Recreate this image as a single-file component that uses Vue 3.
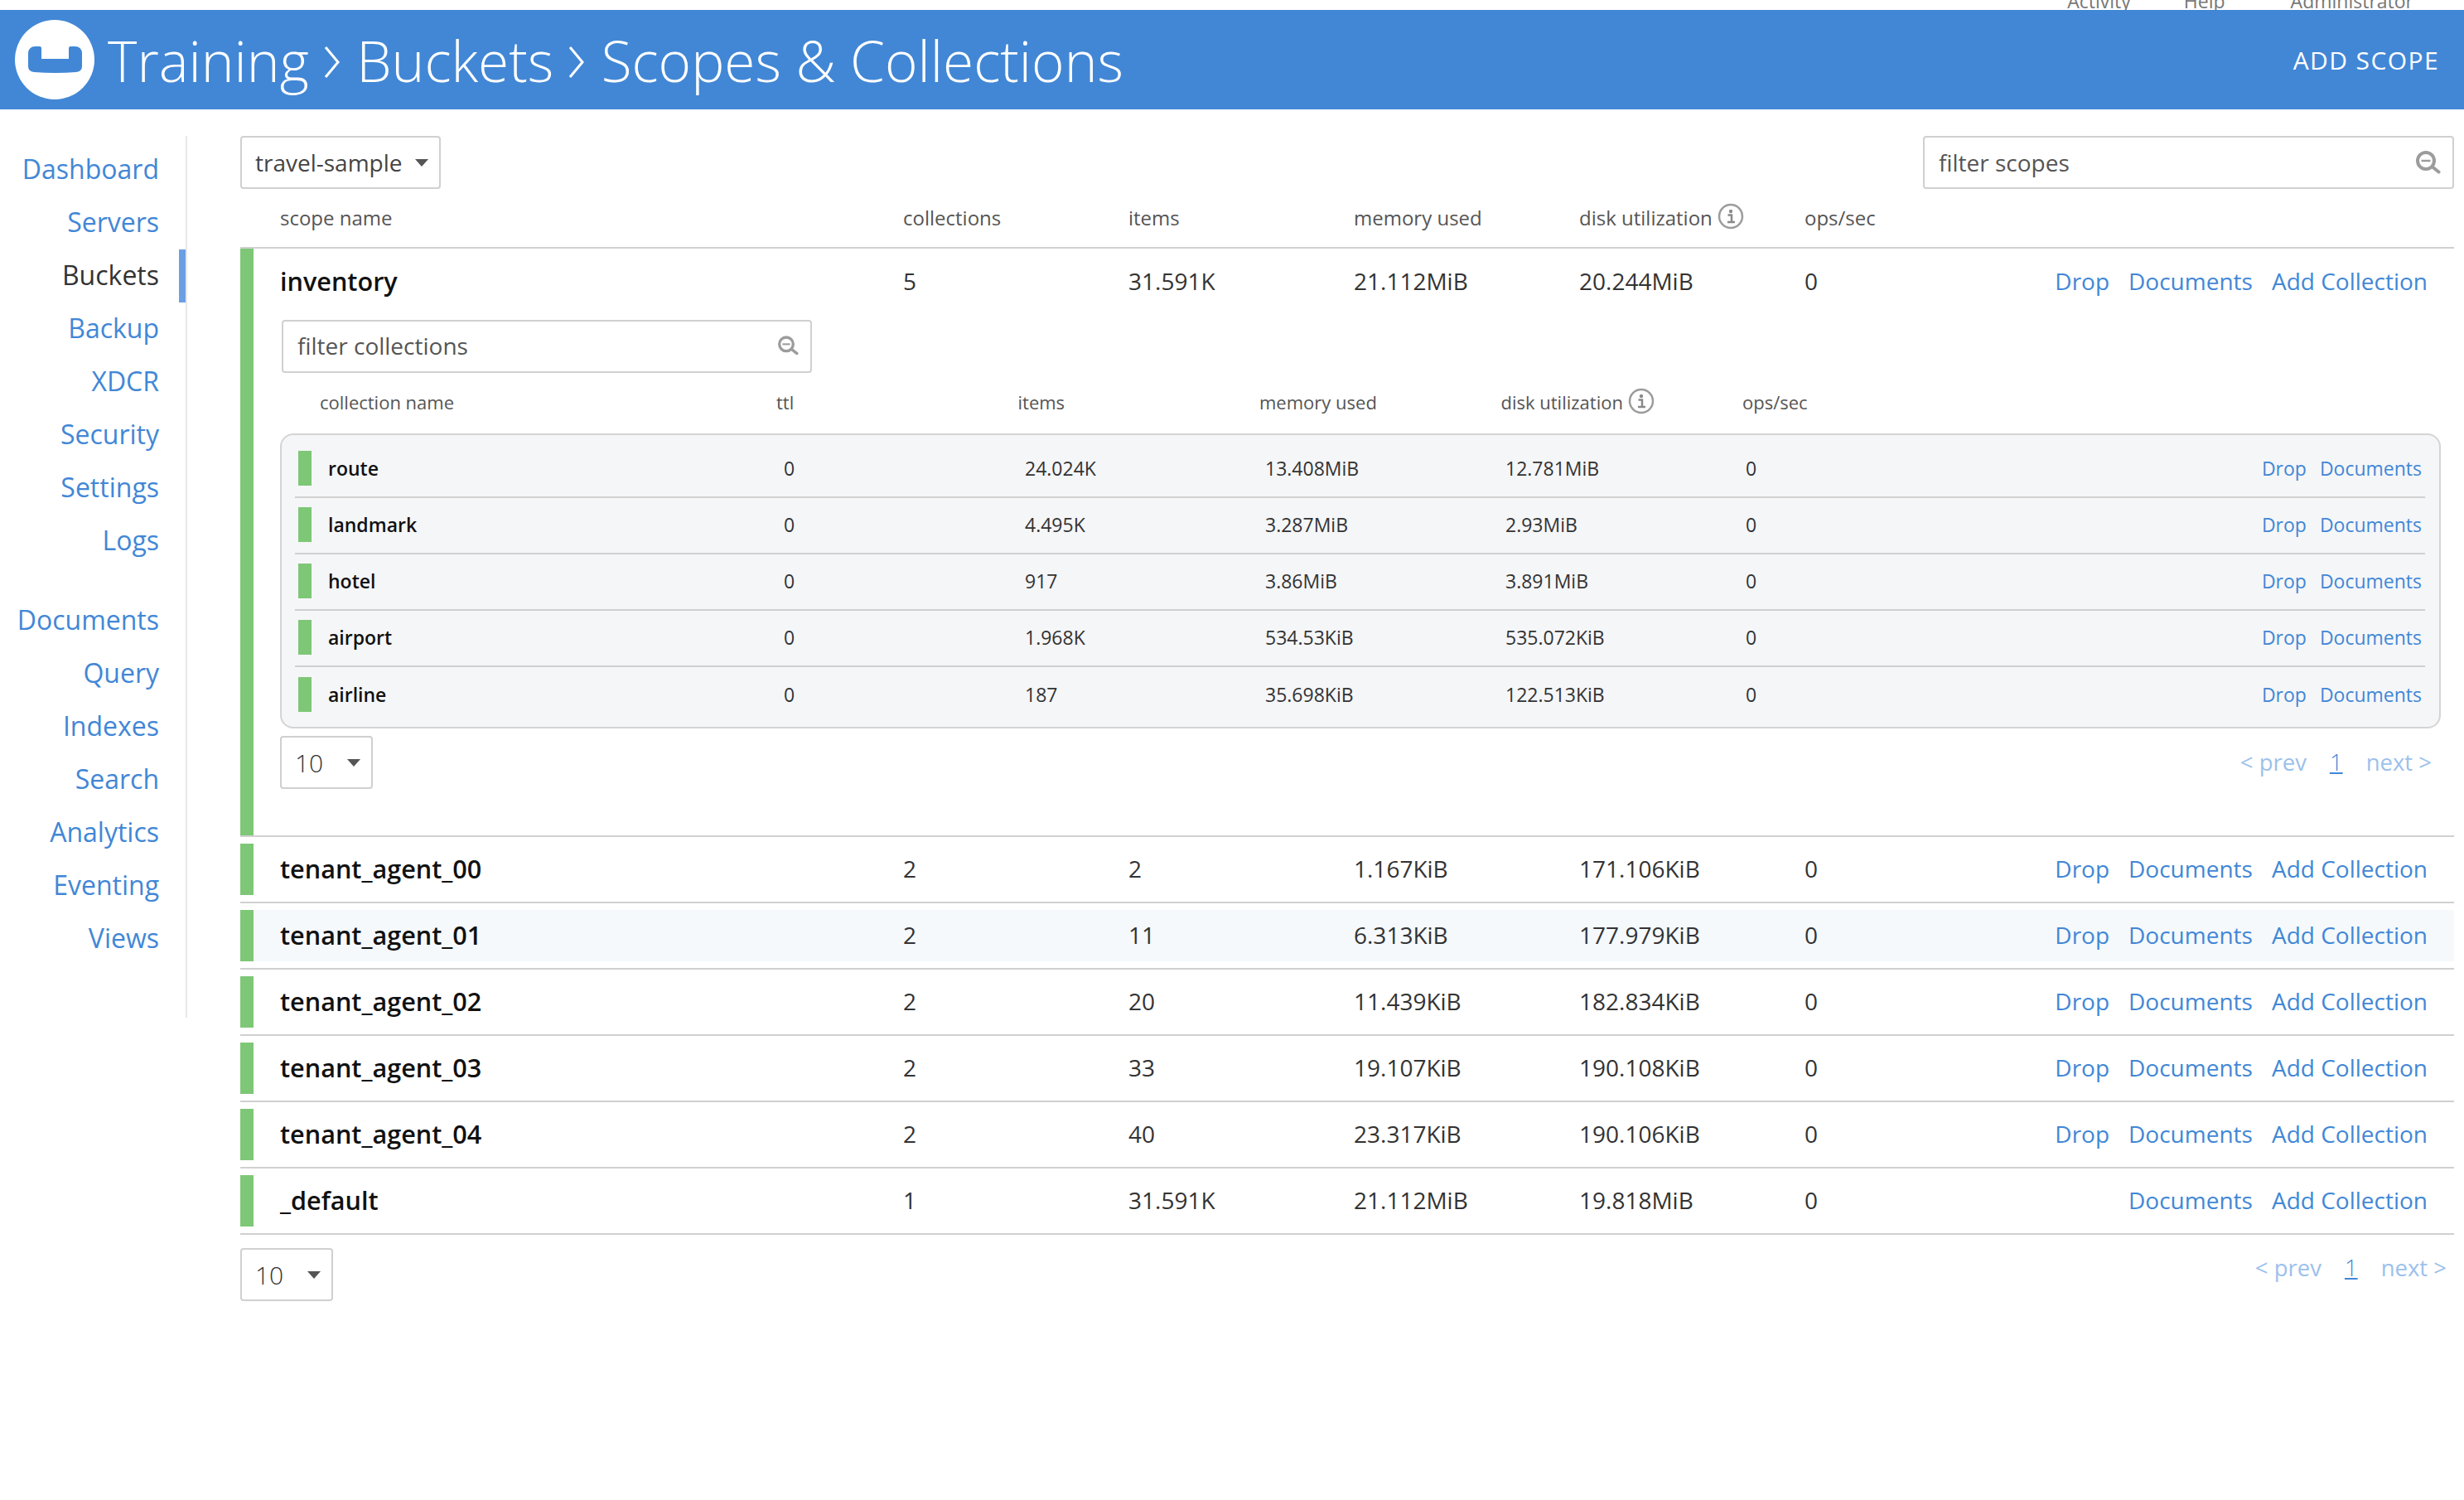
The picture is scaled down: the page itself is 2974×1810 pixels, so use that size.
<template>
  <div class="page">
    <div class="top-links">
      <span>Activity</span>
      <span>Help</span>
      <span class="admin">Administrator</span>
    </div>
    <header class="header">
      <div class="logo">
        <svg width="65" height="32" viewBox="0 0 65 32">
          <path d="M0 8a8 8 0 0 1 8-8h6a2 2 0 0 1 2 2v13h33V2a2 2 0 0 1 2-2h6a8 8 0 0 1 8 8v16q0 6-7 7q-25 2-51 0q-7-1-7-7z" fill="#4287d6" />
        </svg>
      </div>
      <h1 class="title">
        <span>Training</span>
        <svg class="crumb" width="21" height="38" viewBox="0 0 21 38"><path d="M3 1l15 18L3 37" fill="none" stroke="#fff" stroke-width="3" /></svg>
        <span>Buckets</span>
        <svg class="crumb" width="21" height="38" viewBox="0 0 21 38"><path d="M3 1l15 18L3 37" fill="none" stroke="#fff" stroke-width="3" /></svg>
        <span>Scopes &amp; Collections</span>
      </h1>
      <a class="add-scope">ADD SCOPE</a>
    </header>
    <div class="body">
      <nav class="sidebar">
        <div class="nav-group">
          <a v-for="item in navMain" :key="item" class="nav-item" :class="{ active: item === 'Buckets' }">{{ item }}</a>
        </div>
        <div class="nav-group">
          <a v-for="item in navData" :key="item" class="nav-item">{{ item }}</a>
        </div>
      </nav>
      <main class="content">
        <div class="toolbar">
          <div class="select bucket-select">travel-sample<span class="caret"></span></div>
          <div class="filter scope-filter">
            <span>filter scopes</span>
            <svg class="search" width="30" height="28" viewBox="0 0 30 28">
              <circle cx="12" cy="12" r="10" fill="none" stroke="#9c9c9c" stroke-width="4" />
              <path d="M6.500 12h11" stroke="#9c9c9c" stroke-width="2.500" />
              <path d="M20 19.500l7.500 6" stroke="#9c9c9c" stroke-width="4" stroke-linecap="round" />
            </svg>
          </div>
        </div>
        <div class="scope-head">
          <span>scope name</span>
          <span>collections</span>
          <span>items</span>
          <span>memory used</span>
          <span class="with-info">disk utilization
            <svg width="32" height="32" viewBox="0 0 32 32">
              <circle cx="16" cy="16" r="14" fill="none" stroke="#9c9c9c" stroke-width="2.500" />
              <circle cx="16" cy="10" r="2.200" fill="#8a8a8a" />
              <path d="M12.500 14.500h4.500v8M12 23h9" fill="none" stroke="#8a8a8a" stroke-width="2.500" />
            </svg>
          </span>
          <span>ops/sec</span>
        </div>

        <section class="scope-row open">
          <div class="scope-bar"></div>
          <div class="scope-main">
            <div class="scope-cells">
              <span class="scope-name">inventory</span>
              <span>5</span>
              <span>31.591K</span>
              <span>21.112MiB</span>
              <span>20.244MiB</span>
              <span>0</span>
              <div class="actions"><a>Drop</a><a>Documents</a><a>Add Collection</a></div>
            </div>
            <div class="filter collection-filter">
              <span>filter collections</span>
              <svg class="search" width="25" height="24" viewBox="0 0 30 28">
                <circle cx="12" cy="12" r="10" fill="none" stroke="#9c9c9c" stroke-width="4" />
                <path d="M6.500 12h11" stroke="#9c9c9c" stroke-width="2.500" />
                <path d="M20 19.500l7.500 6" stroke="#9c9c9c" stroke-width="4" stroke-linecap="round" />
              </svg>
            </div>
            <div class="collection-head">
              <span>collection name</span>
              <span>ttl</span>
              <span>items</span>
              <span>memory used</span>
              <span class="with-info">disk utilization
                <svg width="32" height="32" viewBox="0 0 32 32">
                  <circle cx="16" cy="16" r="14" fill="none" stroke="#9c9c9c" stroke-width="2.500" />
                  <circle cx="16" cy="10" r="2.200" fill="#8a8a8a" />
                  <path d="M12.500 14.500h4.500v8M12 23h9" fill="none" stroke="#8a8a8a" stroke-width="2.500" />
                </svg>
              </span>
              <span>ops/sec</span>
            </div>
            <div class="collection-panel">
              <div v-for="c in collections" :key="c.name" class="collection-row">
                <div class="collection-bar"></div>
                <span class="collection-name">{{ c.name }}</span>
                <span>0</span>
                <span>{{ c.items }}</span>
                <span>{{ c.memory }}</span>
                <span>{{ c.disk }}</span>
                <span>0</span>
                <div class="collection-actions"><a>Drop</a><a>Documents</a></div>
              </div>
            </div>
            <div class="pager inner-pager">
              <div class="select size-select inner-size">10<span class="caret"></span></div>
              <div class="pages"><a>&lt; prev</a><a class="current">1</a><a>next &gt;</a></div>
            </div>
          </div>
        </section>

        <section v-for="s in scopes" :key="s.name" class="scope-row" :class="{ hovered: s.name === 'tenant_agent_01' }">
          <div class="scope-bar"></div>
          <div class="scope-main">
            <div class="scope-cells">
              <span class="scope-name">{{ s.name }}</span>
              <span>{{ s.collections }}</span>
              <span>{{ s.items }}</span>
              <span>{{ s.memory }}</span>
              <span>{{ s.disk }}</span>
              <span>0</span>
              <div class="actions">
                <a v-if="s.name !== '_default'">Drop</a><a>Documents</a><a>Add Collection</a>
              </div>
            </div>
          </div>
        </section>

        <div class="pager outer-pager">
          <div class="select size-select">10<span class="caret"></span></div>
          <div class="pages"><a>&lt; prev</a><a class="current">1</a><a>next &gt;</a></div>
        </div>
      </main>
    </div>
  </div>
</template>

<script setup>
const navMain = ["Dashboard", "Servers", "Buckets", "Backup", "XDCR", "Security", "Settings", "Logs"];
const navData = ["Documents", "Query", "Indexes", "Search", "Analytics", "Eventing", "Views"];

const collections = [
  { name: "route", items: "24.024K", memory: "13.408MiB", disk: "12.781MiB" },
  { name: "landmark", items: "4.495K", memory: "3.287MiB", disk: "2.93MiB" },
  { name: "hotel", items: "917", memory: "3.86MiB", disk: "3.891MiB" },
  { name: "airport", items: "1.968K", memory: "534.53KiB", disk: "535.072KiB" },
  { name: "airline", items: "187", memory: "35.698KiB", disk: "122.513KiB" },
];

const scopes = [
  { name: "tenant_agent_00", collections: 2, items: "2", memory: "1.167KiB", disk: "171.106KiB" },
  { name: "tenant_agent_01", collections: 2, items: "11", memory: "6.313KiB", disk: "177.979KiB" },
  { name: "tenant_agent_02", collections: 2, items: "20", memory: "11.439KiB", disk: "182.834KiB" },
  { name: "tenant_agent_03", collections: 2, items: "33", memory: "19.107KiB", disk: "190.108KiB" },
  { name: "tenant_agent_04", collections: 2, items: "40", memory: "23.317KiB", disk: "190.106KiB" },
  { name: "_default", collections: 1, items: "31.591K", memory: "21.112MiB", disk: "19.818MiB" },
];
</script>

<style>
html,
body {
  background: #fff;
}
</style>

<style scoped>
.page {
  width: 2974px;
  height: 1810px;
  overflow: hidden;
  font-family: "Open Sans", sans-serif;
  color: #333;
}

a {
  color: #4287d6;
  cursor: pointer;
}

.top-links {
  height: 12px;
  overflow: hidden;
  display: flex;
  justify-content: flex-end;
  align-items: flex-end;
  gap: 64px;
  padding-right: 61px;
  font-size: 23px;
  line-height: 32px;
  color: #777;
}

.top-links span {
  position: relative;
  top: 5px;
}

.top-links .admin {
  margin-left: 15px;
}

.header {
  height: 120px;
  background: #4287d6;
  display: flex;
  align-items: center;
  padding: 0 30px 0 18px;
  color: #fff;
}

.logo {
  width: 96px;
  height: 96px;
  border-radius: 50%;
  background: #fff;
  display: flex;
  align-items: center;
  justify-content: center;
  flex: none;
}

.title {
  margin: 0 0 0 16px;
  padding-top: 2px;
  font-size: 67.500px;
  font-weight: 300;
  line-height: 88px;
  flex: 1;
  white-space: nowrap;
  display: flex;
  align-items: center;
}

.crumb {
  margin: 4px 19.500px 0 17px;
}

.add-scope {
  color: #fff;
  font-size: 30px;
  font-weight: 500;
  letter-spacing: 1.400px;
}

.body {
  display: flex;
  padding-top: 32px;
}

.sidebar {
  width: 226px;
  height: 1064px;
  box-sizing: border-box;
  border-right: 2px solid #e8e8e8;
  flex: none;
  padding-top: 8px;
  display: flex;
  flex-direction: column;
  gap: 32px;
}

.nav-group {
  display: flex;
  flex-direction: column;
}

.nav-item {
  position: relative;
  height: 64px;
  line-height: 64px;
  text-align: right;
  padding-right: 32px;
  font-size: 32px;
}

.nav-item.active {
  color: #333;
}

.nav-item.active::after {
  content: "";
  position: absolute;
  right: 0;
  top: 1px;
  width: 8px;
  height: 64px;
  background: #6b9fe4;
}

.content {
  margin-left: 64px;
  width: 2672px;
  flex: none;
}

.toolbar {
  display: flex;
  justify-content: space-between;
}

.select,
.filter {
  box-sizing: border-box;
  height: 64px;
  border: 2px solid #d0d0d0;
  border-radius: 4px;
  background: #fff;
  display: flex;
  align-items: center;
  font-size: 28px;
  color: #444;
}

.select {
  position: relative;
  padding-left: 16px;
}

.caret {
  position: absolute;
  right: 13px;
  top: 26px;
  border-left: 8px solid transparent;
  border-right: 8px solid transparent;
  border-top: 9px solid #555;
}

.bucket-select {
  width: 242px;
}

.size-select {
  width: 112px;
  font-weight: 300;
  font-size: 30px;
  color: #333;
}

.filter {
  justify-content: space-between;
  padding: 0 14px 0 17px;
  color: #555;
}

.scope-filter {
  width: 641px;
}

.collection-filter {
  width: 640px;
  margin: 6px 0 0 2px;
  padding-bottom: 2px;
}

.scope-head,
.scope-cells {
  display: grid;
  grid-template-columns: 752px repeat(5, 272px) 1fr;
  align-items: center;
}

.scope-head {
  height: 68px;
  padding: 0 0 2px 48px;
  border-bottom: 2px solid #d0d0d0;
  font-size: 24px;
  color: #555;
}

.with-info {
  display: flex;
  align-items: center;
  gap: 6px;
}

.with-info svg {
  margin-top: -3px;
}

.scope-row {
  display: flex;
  position: relative;
  border-bottom: 2px solid #d0d0d0;
}

.scope-row:not(.open) {
  padding: 8px 0;
}

.scope-bar {
  width: 16px;
  flex: none;
  background: #7ec777;
}

.scope-main {
  flex: 1;
  padding-left: 32px;
  min-width: 0;
}

.hovered {
  background: linear-gradient(#fff 8px, #f5f9fc 8px, #f5f9fc calc(100% - 8px), #fff calc(100% - 8px));
}

.scope-cells {
  box-sizing: border-box;
  height: 62px;
  padding-bottom: 2px;
  font-size: 28px;
  color: #333;
}

.open .scope-cells {
  height: 80px;
}

.scope-name {
  font-size: 30.600px;
  font-weight: 600;
  color: #111;
}

.actions {
  display: flex;
  justify-content: flex-end;
  gap: 23px;
  padding-right: 32px;
  white-space: nowrap;
}

.collection-head {
  display: grid;
  grid-template-columns: 551px repeat(4, 291.500px) 1fr;
  align-items: center;
  height: 70px;
  padding: 0 0 3px 48px;
  font-size: 22px;
  color: #555;
}

.collection-panel {
  box-sizing: border-box;
  width: 2608px;
  height: 356px;
  background: #f5f6f8;
  border: 2px solid #d4d4d4;
  border-radius: 16px;
  padding: 8px 17px 0 16px;
}

.collection-row {
  height: 68px;
  box-sizing: border-box;
  display: grid;
  grid-template-columns: 20px 570px 291px 290px 290px 290px 120px 1fr;
  align-items: center;
  padding-bottom: 2px;
  border-bottom: 2px solid #d0d0d0;
  font-size: 23px;
  color: #333;
}

.collection-row:last-child {
  border-bottom: 0;
}

.collection-bar {
  width: 16px;
  height: 42px;
  margin-left: 4px;
  background: #7ec777;
}

.collection-name {
  font-size: 23px;
  font-weight: 600;
  color: #111;
  padding-left: 20px;
}

.collection-actions {
  display: flex;
  justify-content: flex-end;
  gap: 16px;
  padding-right: 4px;
  font-size: 23px;
}

.pager {
  display: flex;
  justify-content: space-between;
  align-items: flex-start;
}

.inner-pager {
  margin-top: 9px;
  height: 120px;
  width: 2608px;
}

.outer-pager {
  margin-top: 16px;
}

.pages {
  display: flex;
  gap: 28px;
  padding: 13px 11px 0 0;
  font-size: 27.500px;
}

.outer-pager .pages {
  padding: 5px 9px 0 0;
}

.pages a {
  color: #9cc1ec;
}

.pages .current {
  color: #4287d6;
  font-weight: 300;
  text-decoration: underline;
}
</style>
